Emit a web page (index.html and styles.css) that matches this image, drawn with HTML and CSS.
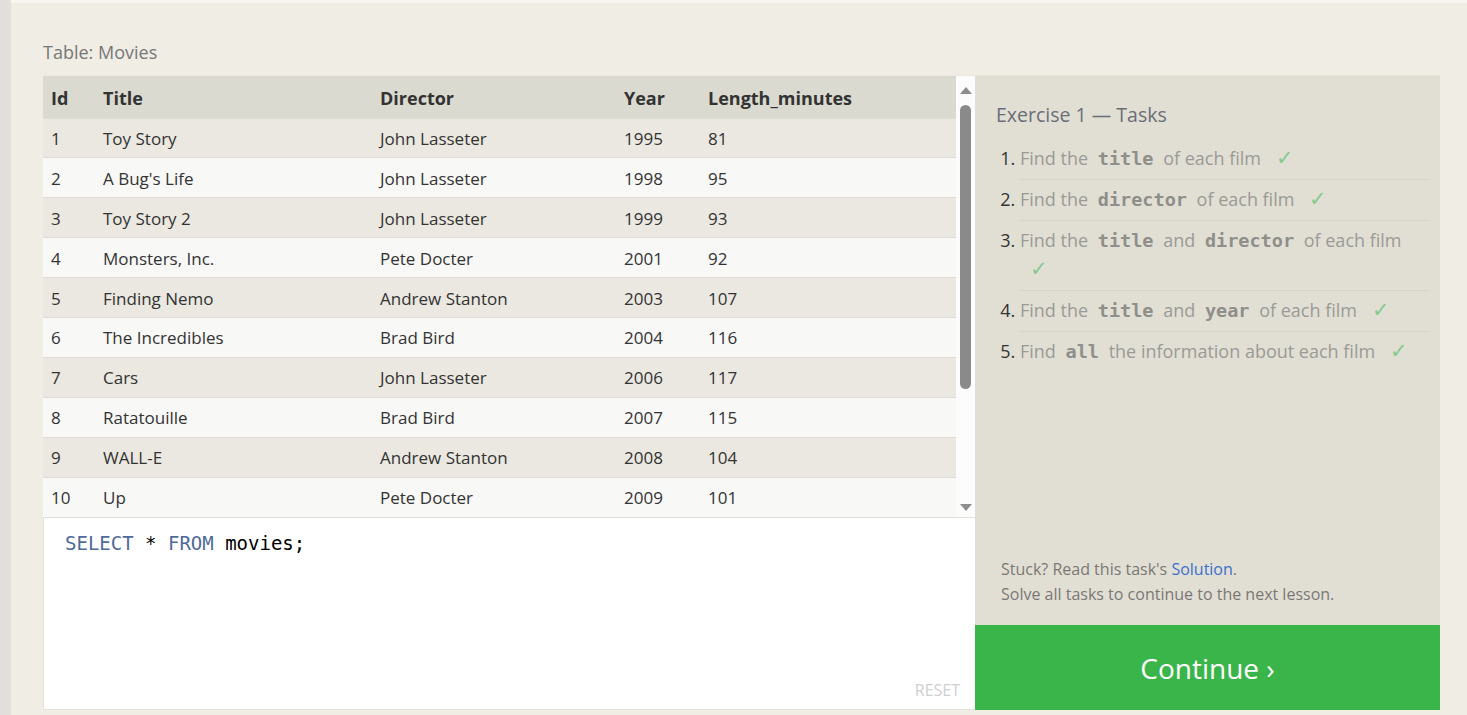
FILE: index.html
```html
<!DOCTYPE html>
<html lang="en">
<head>
<meta charset="utf-8">
<title>SQL Lesson</title>
<link rel="stylesheet" href="styles.css">
</head>
<body>
<div class="page">
  <div class="strip"></div>
  <main class="main">
    <div class="caption">Table: Movies</div>
    <div class="workspace">
      <section class="left">
        <div class="results">
          <table class="grid">
            <thead>
              <tr><th class="c-id">Id</th><th class="c-title">Title</th><th class="c-dir">Director</th><th class="c-year">Year</th><th>Length_minutes</th></tr>
            </thead>
            <tbody>
              <tr><td>1</td><td>Toy Story</td><td>John Lasseter</td><td>1995</td><td>81</td></tr>
              <tr><td>2</td><td>A Bug's Life</td><td>John Lasseter</td><td>1998</td><td>95</td></tr>
              <tr><td>3</td><td>Toy Story 2</td><td>John Lasseter</td><td>1999</td><td>93</td></tr>
              <tr><td>4</td><td>Monsters, Inc.</td><td>Pete Docter</td><td>2001</td><td>92</td></tr>
              <tr><td>5</td><td>Finding Nemo</td><td>Andrew Stanton</td><td>2003</td><td>107</td></tr>
              <tr><td>6</td><td>The Incredibles</td><td>Brad Bird</td><td>2004</td><td>116</td></tr>
              <tr><td>7</td><td>Cars</td><td>John Lasseter</td><td>2006</td><td>117</td></tr>
              <tr><td>8</td><td>Ratatouille</td><td>Brad Bird</td><td>2007</td><td>115</td></tr>
              <tr><td>9</td><td>WALL-E</td><td>Andrew Stanton</td><td>2008</td><td>104</td></tr>
              <tr><td>10</td><td>Up</td><td>Pete Docter</td><td>2009</td><td>101</td></tr>
            </tbody>
          </table>
          <div class="scrollbar">
            <span class="arrow up"></span>
            <div class="track"><div class="thumb"></div></div>
            <span class="arrow down"></span>
          </div>
        </div>
        <div class="editor">
          <div class="code"><span class="kw">SELECT</span> * <span class="kw">FROM</span> movies;</div>
          <div class="reset">RESET</div>
        </div>
      </section>
      <aside class="tasks">
        <div class="tasks-body">
          <h2 class="tasks-title">Exercise 1 — Tasks</h2>
          <ol class="task-list">
            <li>Find the <code>title</code> of each film <span class="check">✓</span></li>
            <li>Find the <code>director</code> of each film <span class="check">✓</span></li>
            <li>Find the <code>title</code> and <code>director</code> of each film <span class="check">✓</span></li>
            <li>Find the <code>title</code> and <code>year</code> of each film <span class="check">✓</span></li>
            <li>Find <code>all</code> the information about each film <span class="check">✓</span></li>
          </ol>
        </div>
        <div class="hint">
          <p>Stuck? Read this task's <a href="#">Solution</a>.</p>
          <p>Solve all tasks to continue to the next lesson.</p>
        </div>
        <button class="continue">Continue ›</button>
      </aside>
    </div>
  </main>
</div>
</body>
</html>
```

FILE: styles.css
```css
* { box-sizing: border-box; }
html, body { margin: 0; padding: 0; }
body {
  font-family: "Open Sans", "Noto Sans", sans-serif;
  color: #333;
  background: #f0ede5;
}
.page {
  display: flex;
  height: 715px;
  overflow: hidden;
}
.strip {
  width: 11px;
  flex: none;
  background: #e2dedb;
}
.main {
  flex: 1;
  border-top: 3px solid #f6f5f1;
  background: #f0ede5;
  padding: 37px 27px 0 32px;
}
.caption {
  font-size: 18px;
  line-height: 24px;
  color: #777;
  margin-bottom: 11px;
}
.workspace {
  display: grid;
  grid-template-columns: 932px 1fr;
  height: 635px;
}
.left {
  display: flex;
  flex-direction: column;
}
.results {
  display: flex;
  height: 442px;
  border-top: 1px solid #ebe9e2;
}
.grid {
  flex: 1;
  border-collapse: collapse;
  font-size: 17px;
  table-layout: fixed;
}
.grid th, .grid td {
  text-align: left;
  padding: 0 8px;
}
.grid th {
  background: #dbdad0;
  height: 42px;
  font-weight: 700;
  font-size: 18px;
  padding-top: 2px;
}
.c-id { width: 52px; }
.c-title { width: 277px; }
.c-dir { width: 244px; }
.c-year { width: 84px; }
.grid td {
  height: 39.8px;
  padding-top: 1px;
  border-top: 1px solid #dedcd5;
}
.grid tbody tr:nth-child(odd) td { background: #eae8e0; }
.grid tbody tr:nth-child(even) td { background: #f8f8f7; }
.scrollbar {
  width: 19px;
  flex: none;
  background: #fcfcfc;
  display: flex;
  flex-direction: column;
  align-items: center;
  padding: 11px 0 6px;
}
.arrow {
  width: 0;
  height: 0;
  border-left: 6px solid transparent;
  border-right: 6px solid transparent;
}
.arrow.up { border-bottom: 7px solid #8e8e8e; }
.arrow.down { border-top: 7px solid #8e8e8e; }
.track {
  flex: 1;
  width: 11px;
  padding-top: 11px;
  padding-bottom: 110px;
}
.thumb {
  height: 284px;
  background: #8a8a8a;
  border-radius: 6px;
}
.editor {
  flex: 1;
  background: #fff;
  border: 1px solid #e3e0d8;
  border-right: none;
  display: flex;
  flex-direction: column;
  padding: 12px 15px 9px 21px;
}
.code {
  font-family: "DejaVu Sans Mono", "Liberation Mono", monospace;
  font-size: 19px;
  line-height: 26px;
  color: #000;
}
.kw { color: #4f6a9a; }
.reset {
  margin-top: auto;
  align-self: flex-end;
  font-size: 16px;
  color: #cfcfcf;
  line-height: 20px;
}
.tasks {
  display: flex;
  flex-direction: column;
  background: #e1dfd4;
  border-top: 1px solid #e6e4db;
}
.tasks-body {
  flex: 1;
  padding: 26px 10px 0 21px;
}
.tasks-title {
  margin: 0 0 11px;
  font-size: 19.5px;
  line-height: 26px;
  font-weight: 400;
  color: #6a6e78;
}
.task-list {
  margin: 0;
  padding: 0 0 0 24px;
  font-size: 18px;
  color: #9a9a96;
}
.task-list li {
  line-height: 29px;
  padding: 5px 0 6px;
  border-bottom: 1px solid #d7d5cb;
}
.task-list li:last-child { border-bottom: none; }
.task-list li::marker { color: #333; }
.task-list code {
  font-family: "DejaVu Sans Mono", "Liberation Mono", monospace;
  font-weight: 700;
  font-size: 18.5px;
  line-height: 1;
  color: #8e8e8a;
  padding: 0 5px;
}
.check {
  color: #86c98f;
  font-size: 21px;
  line-height: 1;
  margin-left: 10px;
}
.hint {
  padding: 0 10px 18px 26px;
  font-size: 16px;
  line-height: 25px;
  color: #7a7875;
}
.hint p { margin: 0; }
.hint a { color: #3c6fcc; text-decoration: none; }
.continue {
  height: 85px;
  border: none;
  background: #3ab54a;
  color: #fff;
  font-family: inherit;
  font-size: 28px;
  cursor: pointer;
}
```
